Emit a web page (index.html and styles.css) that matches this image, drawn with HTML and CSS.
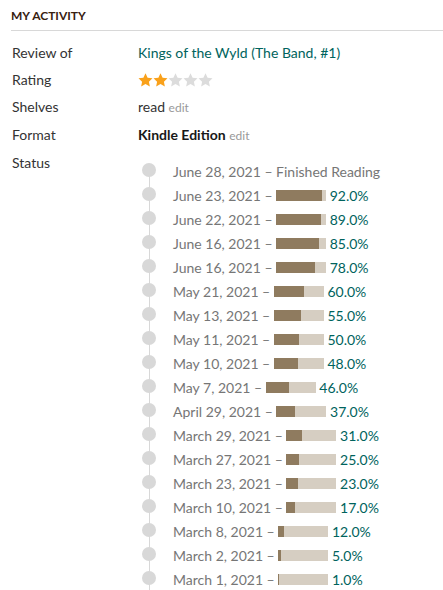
FILE: index.html
```html
<!DOCTYPE html>
<html lang="en">
<head>
  <meta charset="UTF-8">
  <meta name="viewport" content="width=device-width, initial-scale=1.0">
  <title>My Activity</title>
  <link rel="stylesheet" href="styles.css">
</head>
<body>
  <section class="activity">
    <h2 class="activity-title">My Activity</h2>

    <div class="info">
      <div class="info-label">Review of</div>
      <div class="info-value"><a class="book-link" href="#">Kings of the Wyld (The Band, #1)</a></div>

      <div class="info-label">Rating</div>
      <div class="info-value stars">
        <svg class="star on" viewBox="1 1 18 18"><path d="M10 1.2l2.7 5.8 6.3.8-4.6 4.3 1.2 6.3L10 15.3l-5.6 3.1 1.2-6.3L1 7.8l6.3-.8z"/></svg>
        <svg class="star on" viewBox="1 1 18 18"><path d="M10 1.2l2.7 5.8 6.3.8-4.6 4.3 1.2 6.3L10 15.3l-5.6 3.1 1.2-6.3L1 7.8l6.3-.8z"/></svg>
        <svg class="star" viewBox="1 1 18 18"><path d="M10 1.2l2.7 5.8 6.3.8-4.6 4.3 1.2 6.3L10 15.3l-5.6 3.1 1.2-6.3L1 7.8l6.3-.8z"/></svg>
        <svg class="star" viewBox="1 1 18 18"><path d="M10 1.2l2.7 5.8 6.3.8-4.6 4.3 1.2 6.3L10 15.3l-5.6 3.1 1.2-6.3L1 7.8l6.3-.8z"/></svg>
        <svg class="star" viewBox="1 1 18 18"><path d="M10 1.2l2.7 5.8 6.3.8-4.6 4.3 1.2 6.3L10 15.3l-5.6 3.1 1.2-6.3L1 7.8l6.3-.8z"/></svg>
      </div>

      <div class="info-label">Shelves</div>
      <div class="info-value"><span class="shelf">read</span> <a class="edit" href="#">edit</a></div>

      <div class="info-label">Format</div>
      <div class="info-value"><strong class="format">Kindle Edition</strong> <a class="edit" href="#">edit</a></div>

      <div class="info-label">Status</div>
      <div class="info-value">
        <ul class="timeline" id="timeline"></ul>
      </div>
    </div>
  </section>

  <script>
    const updates = [
      ["June 23, 2021", 92], ["June 22, 2021", 89], ["June 16, 2021", 85],
      ["June 16, 2021", 78], ["May 21, 2021", 60], ["May 13, 2021", 55],
      ["May 11, 2021", 50], ["May 10, 2021", 48], ["May 7, 2021", 46],
      ["April 29, 2021", 37], ["March 29, 2021", 31], ["March 27, 2021", 25],
      ["March 23, 2021", 23], ["March 10, 2021", 17], ["March 8, 2021", 12],
      ["March 2, 2021", 5], ["March 1, 2021", 1]
    ];

    let html = `<li class="timeline-item"><span class="dot"></span>
      <span class="update">June 28, 2021 – Finished Reading</span></li>`;
    updates.forEach(([date, pct]) => {
      html += `<li class="timeline-item"><span class="dot"></span>
        <span class="update">${date} – <span class="bar"><span class="bar-fill" style="width: ${pct}%"></span></span>
        <span class="pct">${pct.toFixed(1)}%</span></span></li>`;
    });
    document.getElementById("timeline").innerHTML = html;
  </script>
</body>
</html>
```

FILE: styles.css
```css
body {
  margin: 0;
  padding: 0;
  font-family: Lato, "Liberation Sans", sans-serif;
  background-color: #fff;
  color: #333;
}

.activity {
  padding-left: 11px;
}

.activity-title {
  margin: 0;
  padding: 8px 0 6px;
  font-size: 12px;
  line-height: 16px;
  font-weight: 700;
  text-transform: uppercase;
  color: #382110;
  border-bottom: 1px solid #d8d8d8;
}

.info {
  display: grid;
  grid-template-columns: 127px 1fr;
  margin-top: 8px;
  font-size: 14px;
  line-height: 27px;
}

.info-label {
  color: #333;
  padding-left: 1px;
}

.book-link {
  color: #00635d;
  text-decoration: none;
}

.stars {
  display: flex;
  align-items: center;
  padding-top: 1px;
}

.star {
  width: 15px;
  height: 14px;
  fill: #dcdcdc;
}

.star.on {
  fill: #f9a11b;
}

.shelf {
  color: #333;
}

.format {
  color: #181818;
}

.edit {
  font-size: 12px;
  color: #999;
  text-decoration: none;
}

.timeline {
  list-style: none;
  margin: 11px 0 0;
  padding: 0;
  font-size: 14px;
  line-height: 24px;
  color: #767676;
}

.timeline-item {
  display: flex;
  align-items: flex-start;
  background: linear-gradient(#d8d8d8, #d8d8d8) no-repeat 11px 0 / 1px 100%;
}

.timeline-item:first-child {
  background-position: 11px 9px;
}

.dot {
  flex: none;
  width: 14px;
  height: 14px;
  margin: 3px 0 0 4px;
  border-radius: 50%;
  background-color: #d8d8d8;
}

.update {
  margin-left: 17px;
  white-space: nowrap;
}

.bar {
  display: inline-block;
  width: 50px;
  height: 11px;
  vertical-align: 0;
  background-color: #d6cec2;
}

.bar-fill {
  display: block;
  height: 100%;
  background-color: #8f7b5f;
}

.pct {
  color: #00635d;
}
```
